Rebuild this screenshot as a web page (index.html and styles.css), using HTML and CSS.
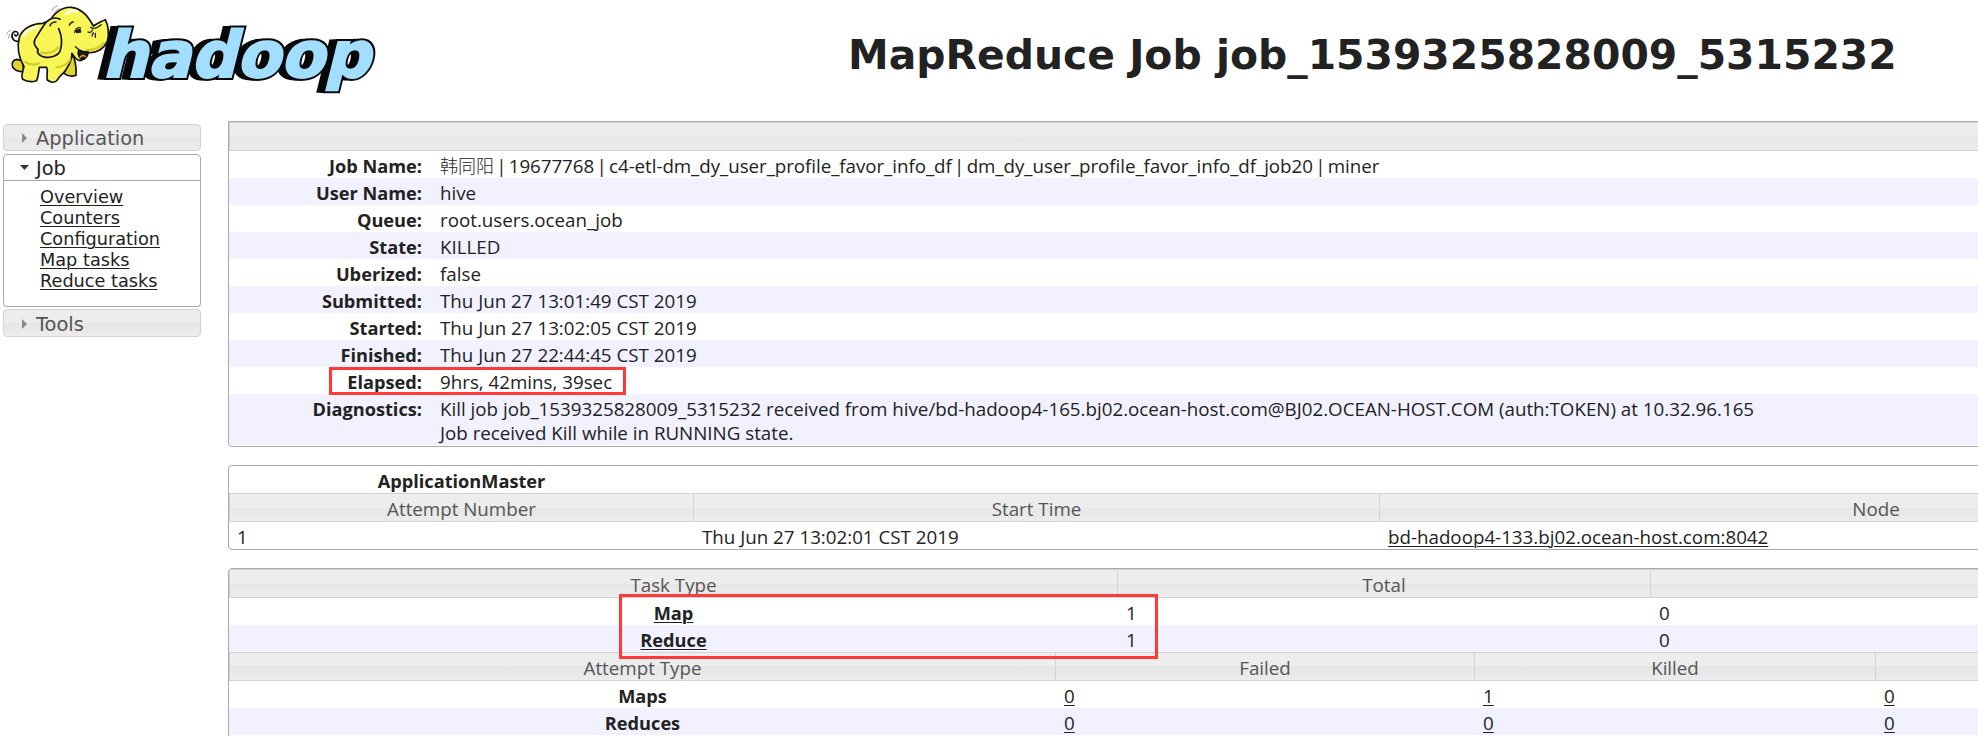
FILE: index.html
```html
<!DOCTYPE html>
<html lang="en">
<head>
<meta charset="utf-8">
<title>MapReduce Job job_1539325828009_5315232</title>
<link rel="stylesheet" href="styles.css">
</head>
<body>
<div class="page">
  <header class="top">
    <svg class="logo" width="390" height="100" viewBox="0 0 390 100">
      <g class="word" transform="translate(102 77) skewX(-14)">
        <g class="word-back">
          <text x="-7" y="0" textLength="268">hadoop</text>
          <text x="-4" y="0" textLength="268">hadoop</text>
        </g>
        <text class="word-edge" x="0" y="0" textLength="268">hadoop</text>
        <text class="word-face" x="0" y="0" textLength="268">hadoop</text>
      </g>
      <g transform="scale(.33333)" stroke-linejoin="round" stroke-linecap="round">
        <g stroke="#111" stroke-width="5">
          <path fill="#e0d52c" d="M50 178C38 180 34 190 38 202C46 212 60 216 72 214L66 182ZM205 185L192 220C205 230 218 230 228 226C230 205 226 185 220 165Z"/>
          <path fill="none" d="M60 122C46 128 34 118 36 104C40 92 52 92 54 100C54 108 46 110 44 104"/>
          <path fill="#f8f556" d="M128 70C100 70 68 84 58 112C50 142 56 172 72 200C68 218 62 228 68 238C82 246 98 246 110 242C116 228 116 214 118 202L140 202C146 214 138 228 142 240C154 250 166 248 172 240C176 228 192 222 200 206C210 190 216 176 216 160C222 170 228 180 240 182C254 180 264 168 264 158C290 160 312 146 322 124C328 102 326 80 316 59C302 64 290 72 280 78C268 56 250 26 214 22C186 20 160 42 152 60Z"/>
          <path fill="#f8f556" d="M180 58C160 48 142 60 130 78L106 116C98 128 106 140 114 148C108 160 122 170 138 172C156 174 174 166 180 154C188 130 184 104 176 86"/>
          <path fill="#20200c" d="M238 150C246 156 256 156 264 154C262 168 254 180 242 176C234 168 232 154 238 150Z"/>
        </g>
        <path d="M72 106C82 90 96 82 112 82M198 42C206 32 222 30 232 34" fill="none" stroke="#fffde6" stroke-width="8"/>
        <path d="M210 178C204 196 184 200 170 202M262 150C282 150 300 142 312 128M174 142C164 158 140 162 124 158M76 186C88 194 104 196 116 190" fill="none" stroke="#d9cc27" stroke-width="7"/>
        <path d="M240 172C246 164 254 166 256 170" fill="none" stroke="#f09b2d" stroke-width="4"/>
        <g fill="none" stroke="#222" stroke-width="4">
          <path d="M150 78C152 70 160 66 168 66M208 76C210 70 216 66 220 66M224 98C226 88 234 80 242 84M272 82C280 90 296 80 304 74M264 96C270 100 274 96 278 90M276 108L280 98M286 112L286 100M226 140L238 150"/>
          <path d="M226 92L240 88L242 96L232 98Z" fill="#222"/>
        </g>
        <path d="M156 32C158 24 164 20 172 18M164 38C168 32 174 28 180 26M20 102C22 96 26 92 32 92M26 114L28 104" fill="none" stroke="#999" stroke-width="3"/>
      </g>
    </svg>
    <h1 class="title">MapReduce Job job_1539325828009_5315232</h1>
  </header>

  <div class="body">
    <nav class="nav">
      <h3 class="nav-head"><svg class="arrow" width="6" height="10"><path d="M0 0L5 5L0 10Z" fill="#888"/></svg>Application</h3>
      <h3 class="nav-head open"><svg class="arrow down" width="9" height="6"><path d="M0 0H9L4.500 5Z" fill="#333"/></svg>Job</h3>
      <ul class="nav-list">
        <li><a>Overview</a></li>
        <li><a>Counters</a></li>
        <li><a>Configuration</a></li>
        <li><a>Map tasks</a></li>
        <li><a>Reduce tasks</a></li>
      </ul>
      <h3 class="nav-head last"><svg class="arrow" width="6" height="10"><path d="M0 0L5 5L0 10Z" fill="#888"/></svg>Tools</h3>
    </nav>

    <main class="content">
      <section class="table info">
        <div class="row head first"><div class="cell"></div></div>
        <div class="row"><b>Job Name:</b><span class="job-name"><span class="cjk">韩同阳</span> <i class="pipe">|</i> 19677768 <i class="pipe">|</i> c4-etl-dm_dy_user_profile_favor_info_df <i class="pipe">|</i> dm_dy_user_profile_favor_info_df_job20 <i class="pipe">|</i> miner</span></div>
        <div class="row alt"><b>User Name:</b><span>hive</span></div>
        <div class="row"><b>Queue:</b><span>root.users.ocean_job</span></div>
        <div class="row alt"><b>State:</b><span>KILLED</span></div>
        <div class="row"><b>Uberized:</b><span>false</span></div>
        <div class="row alt"><b>Submitted:</b><span>Thu Jun 27 13:01:49 CST 2019</span></div>
        <div class="row"><b>Started:</b><span>Thu Jun 27 13:02:05 CST 2019</span></div>
        <div class="row alt"><b>Finished:</b><span>Thu Jun 27 22:44:45 CST 2019</span></div>
        <div class="row"><b>Elapsed:</b><span>9hrs, 42mins, 39sec</span></div>
        <div class="row alt diag"><b>Diagnostics:</b><span>Kill job job_1539325828009_5315232 received from hive/bd-hadoop4-165.bj02.ocean-host.com@BJ02.OCEAN-HOST.COM (auth:TOKEN) at 10.32.96.165<br>Job received Kill while in RUNNING state.</span></div>
      </section>

      <section class="table master">
        <div class="row caption"><b>ApplicationMaster</b></div>
        <div class="row head"><div class="cell">Attempt Number</div><div class="cell">Start Time</div><div class="cell">Node</div></div>
        <div class="row data"><span>1</span><span>Thu Jun 27 13:02:01 CST 2019</span><span><a>bd-hadoop4-133.bj02.ocean-host.com:8042</a></span></div>
      </section>

      <section class="table tasks">
        <div class="row head first"><div class="cell">Task Type</div><div class="cell">Total</div><div class="cell"></div></div>
        <div class="row"><b><a>Map</a></b><span>1</span><span>0</span></div>
        <div class="row alt"><b><a>Reduce</a></b><span>1</span><span>0</span></div>
        <div class="row head attempts"><div class="cell">Attempt Type</div><div class="cell">Failed</div><div class="cell">Killed</div><div class="cell"></div></div>
        <div class="row attempts"><b>Maps</b><span><a>0</a></span><span><a>1</a></span><span><a>0</a></span></div>
        <div class="row alt attempts"><b>Reduces</b><span><a>0</a></span><span><a>0</a></span><span><a>0</a></span></div>
      </section>
    </main>
  </div>
  <div class="mark mark-elapsed"></div>
  <div class="mark mark-tasks"></div>
</div>
</body>
</html>
```
FILE: styles.css
```css
* { box-sizing: border-box; }
body {
  margin: 0;
  background: #fff;
  color: #222;
  font: 18.75px/24px "Open Sans", "Noto Sans CJK SC", sans-serif;
}
.page { position: relative; width: 1978px; height: 736px; overflow: hidden; }
a { color: #222; text-decoration: underline; text-decoration-thickness: 1px; text-underline-offset: 2px; }

.top { display: flex; height: 121px; }
.logo { flex: none; width: 390px; height: 100px; }
.word { font: bold 64px "DejaVu Sans", sans-serif; stroke-linejoin: miter; }
.word-back { fill: #080808; stroke: #080808; stroke-width: 5; }
.word-edge { fill: #080808; stroke: #080808; stroke-width: 6; }
.word-face { fill: #a1deff; stroke: #a1deff; stroke-width: 2; }
.title {
  margin: 31px 0 0 458px;
  font: bold 40.87px/48px "DejaVu Sans", sans-serif;
  white-space: nowrap;
}

.body { display: flex; }
.nav { flex: none; width: 198px; margin: 3px 27px 0 3px; font-family: "DejaVu Sans", sans-serif; }
.nav-head {
  display: flex;
  align-items: center;
  height: 27px;
  margin: 0 0 3px;
  padding: 1px 0 0 18px;
  border: 1px solid #d3d3d3;
  border-radius: 4px;
  background: linear-gradient(#ededed 0 50%, #e6e6e6 50%, #ececec);
  color: #555;
  font-size: 19.4px;
  font-weight: normal;
  line-height: 25px;
}
.arrow { flex: none; width: 14px; height: 10px; }
.arrow.down { margin-left: -2px; width: 16px; height: 6px; }
.nav-head.open { margin: 0; border-color: #aaa; border-radius: 4px 4px 0 0; background: #fff; color: #212121; }
.nav-head.last { height: 28px; padding-top: 2px; }
.nav-list {
  list-style: none;
  height: 126px;
  margin: 0 0 2px;
  padding: 6px 0 0 36px;
  border: 1px solid #aaa;
  border-top: 0;
  border-radius: 0 0 4px 4px;
  font-size: 17.7px;
  line-height: 21px;
}

.content { flex: none; width: 2160px; }
.table { border: 1px solid #aaa; border-radius: 4px; margin-bottom: 18px; overflow: hidden; white-space: nowrap; }
.row { display: grid; height: 27px; line-height: 30px; }
.alt { background: #f1f1ff; }
.cell {
  height: 29px;
  border: 1px solid #d3d3d3;
  border-left-width: 0;
  background: linear-gradient(#ededed 0 50%, #e6e6e6 50%, #ececec);
  color: #555;
  text-align: center;
}
.cell:first-child { border-left-width: 1px; }
.head { height: 29px; line-height: 29px; }
.row b { font-weight: 700; font-size: 18.2px; text-align: center; }

.info { height: 326px; border-radius: 0 0 4px 4px; }
.info .row { grid-template-columns: 193px 1fr; column-gap: 18px; }
.info .head { grid-template-columns: 1fr; }
.info b { text-align: right; }
.info .diag { height: 51px; line-height: 24px; padding-top: 3px; }
.job-name { letter-spacing: -.05px; }
.cjk { font: 18px/20px "Noto Sans CJK SC", sans-serif; font-weight: 300; }
.pipe { font-style: normal; margin: 0 -2.5px; }

.master { height: 85px; }
.master .row { grid-template-columns: 465px 686px 993px 1fr; }
.master .data { padding-left: 8px; line-height: 29px; }

.tasks { height: 171px; }
.tasks .row { grid-template-columns: 889px 533px 1fr; }
.tasks .attempts { grid-template-columns: 827px 419px 401px 1fr; }
.tasks span { padding-left: 8px; }

/* red callouts lying over the tables */
.mark { position: absolute; border: 3px solid #ff3838; }
.mark-elapsed { left: 329px; top: 367px; width: 297px; height: 28px; }
.mark-tasks { left: 619px; top: 594px; width: 539px; height: 65px; }
```
